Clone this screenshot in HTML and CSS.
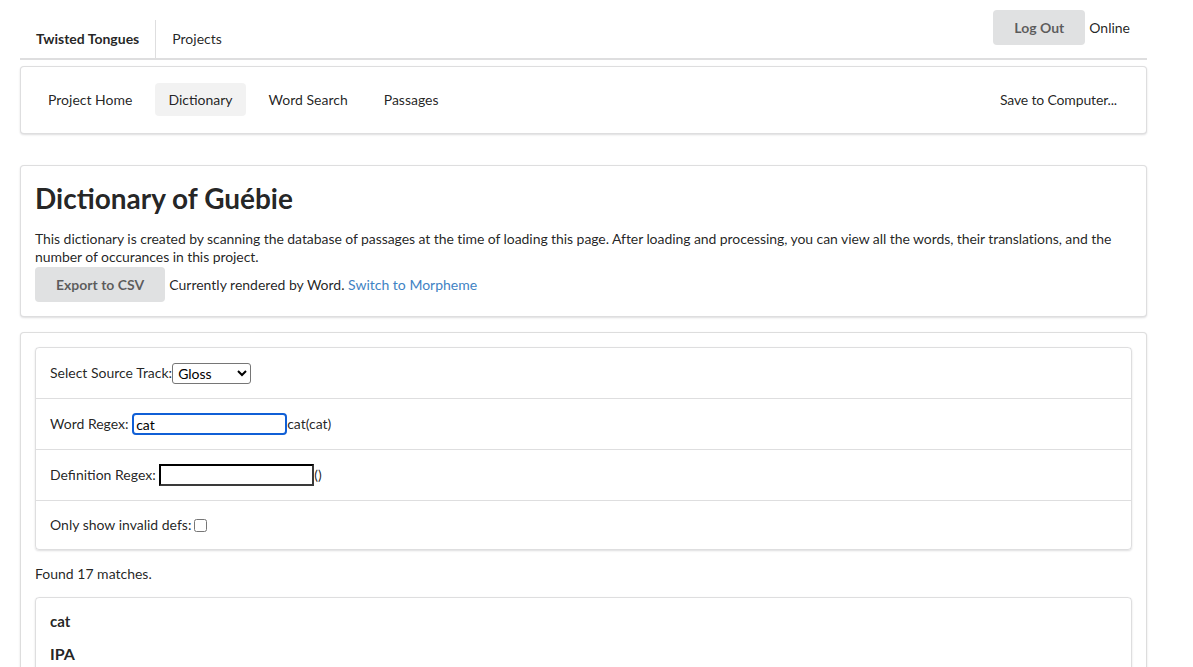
FILE: index.html
```html
<!DOCTYPE html>
<html lang="en">
<head>
<meta charset="utf-8">
<title>Dictionary of Guébie</title>
<link rel="stylesheet" href="styles.css">
</head>
<body>
<div class="page">
  <header class="topbar">
    <nav class="topmenu">
      <a class="top-item brand">Twisted Tongues</a>
      <a class="top-item">Projects</a>
    </nav>
    <div class="account">
      <button class="btn">Log Out</button>
      <span class="status">Online</span>
    </div>
  </header>

  <nav class="segment navseg">
    <a class="nav-item">Project Home</a>
    <a class="nav-item active">Dictionary</a>
    <a class="nav-item">Word Search</a>
    <a class="nav-item">Passages</a>
    <a class="nav-item right">Save to Computer...</a>
  </nav>

  <section class="segment intro">
    <h1 class="title">Dictionary of Guébie</h1>
    <p class="desc">This dictionary is created by scanning the database of passages at the time of loading this page. After loading and processing, you can view all the words, their translations, and the number of occurances in this project.</p>
    <div class="actions">
      <button class="btn">Export to CSV</button>
      <span class="render-note">Currently rendered by Word. <a class="link">Switch to Morpheme</a></span>
    </div>
  </section>

  <section class="segment results">
    <div class="filters">
      <div class="filter-row">
        <label class="flabel">Select Source Track:</label><select class="track"><option>Gloss</option><option>Word</option></select>
      </div>
      <div class="filter-row">
        <label class="flabel">Word Regex: </label><input class="rx focus" type="text" value="cat"><span class="rx-echo">cat(cat)</span>
      </div>
      <div class="filter-row">
        <label class="flabel">Definition Regex: </label><input class="rx" type="text" value=""><span class="rx-echo">()</span>
      </div>
      <div class="filter-row">
        <label class="flabel">Only show invalid defs:</label><input class="chk" type="checkbox">
      </div>
    </div>
    <p class="found">Found 17 matches.</p>
    <div class="entry">
      <div class="entry-word">cat</div>
      <div class="entry-label">IPA</div>
      <div class="entry-val">ɡ̀ɔ̄ɓʊ̄</div>
    </div>
  </section>
</div>
</body>
</html>
```

FILE: styles.css
```css
* { box-sizing: border-box; }

html, body {
  margin: 0;
  padding: 0;
  background: #ffffff;
}

body {
  font-family: Lato, "Noto Sans", sans-serif;
  font-size: 14px;
  line-height: 20px;
  color: rgba(0, 0, 0, 0.87);
}

a { color: inherit; text-decoration: none; cursor: pointer; }

.page {
  width: 1127px;
  margin-left: 20px;
}

/* top bar */
.topbar {
  display: flex;
  justify-content: space-between;
  align-items: flex-start;
  padding-top: 10px;
  border-bottom: 2px solid rgba(34, 36, 38, 0.15);
}

.topmenu {
  display: flex;
  margin-top: 10px;
  height: 38px;
}

.top-item {
  display: flex;
  align-items: center;
  padding: 0 16px;
  height: 38px;
}

.brand {
  font-weight: 700;
  border-right: 1px solid rgba(34, 36, 38, 0.15);
}

.account {
  display: flex;
  align-items: center;
  gap: 4px;
  padding-right: 17px;
}

.btn {
  font-family: Lato, "Noto Sans", sans-serif;
  font-size: 14px;
  font-weight: 700;
  line-height: 1;
  color: rgba(0, 0, 0, 0.6);
  background: #e0e1e2;
  border: none;
  border-radius: 4px;
  padding: 0 21px;
  height: 35px;
  cursor: pointer;
}

/* segments */
.segment {
  border: 1px solid rgba(34, 36, 38, 0.15);
  border-radius: 4px;
  box-shadow: 0 1px 2px 0 rgba(34, 36, 38, 0.15);
  background: #fff;
}

.navseg {
  margin-top: 6px;
  display: flex;
  align-items: center;
  gap: 10px;
  padding: 16px 14px 17px;
}

.nav-item {
  display: flex;
  align-items: center;
  height: 33px;
  padding: 0 13px;
  border-radius: 4px;
}

.nav-item.active {
  background: rgba(0, 0, 0, 0.05);
}

.nav-item.right {
  margin-left: auto;
  margin-right: 2px;
  letter-spacing: -0.15px;
}

.intro {
  margin-top: 31px;
  padding: 14px;
}

.title {
  font-size: 28px;
  line-height: 36px;
  font-weight: 700;
  margin: 0 0 14px;
}

.desc {
  margin: 0;
  line-height: 18px;
  letter-spacing: -0.07px;
}

.actions {
  display: flex;
  align-items: center;
  gap: 4px;
  margin-top: 1px;
}

.link { color: #4183c4; }

.results {
  margin-top: 15px;
  padding: 14px 14px 0;
  height: 340px;
  overflow: hidden;
  border-bottom: none;
  border-radius: 4px 4px 0 0;
}

.filters {
  border: 1px solid rgba(34, 36, 38, 0.15);
  border-radius: 4px;
  box-shadow: 0 1px 2px 0 rgba(34, 36, 38, 0.15);
}

.filter-row {
  display: flex;
  align-items: center;
  padding: 14px;
  min-height: 51px;
  border-top: 1px solid rgba(34, 36, 38, 0.15);
}

.filter-row:first-child { border-top: none; min-height: 50px; }
.filter-row:last-child { min-height: 47px; }

.flabel { white-space: pre; }

.track {
  font-family: Lato, "Noto Sans", sans-serif;
  font-size: 14px;
  width: 79px;
  height: 21px;
  padding: 0 1px;
  border: 1px solid #767676;
  border-radius: 3px;
  color: #000;
  background: #fff;
}

.rx {
  font-family: Lato, "Noto Sans", sans-serif;
  font-size: 14px;
  width: 155px;
  height: 22px;
  padding: 0 2px;
  border: 2px inset #3a3a3a;
  color: #000;
  background: #fff;
}

.rx.focus {
  border: 2px solid #105fd6;
  border-radius: 4px;
  outline: none;
}

.chk {
  width: 13px;
  height: 13px;
  margin: 0 0 0 3px;
}

.found {
  margin: 14px 0 13px;
  line-height: 20px;
}

.entry {
  border: 1px solid rgba(34, 36, 38, 0.15);
  border-radius: 4px;
  box-shadow: 0 1px 2px 0 rgba(34, 36, 38, 0.15);
  padding: 14px;
  height: 200px;
}

.entry-word {
  font-weight: 700;
  font-size: 15px;
  line-height: 18px;
}

.entry-label {
  font-weight: 700;
  font-size: 16px;
  line-height: 20px;
  margin-top: 14px;
}

.entry-val {
  line-height: 20px;
}
```
